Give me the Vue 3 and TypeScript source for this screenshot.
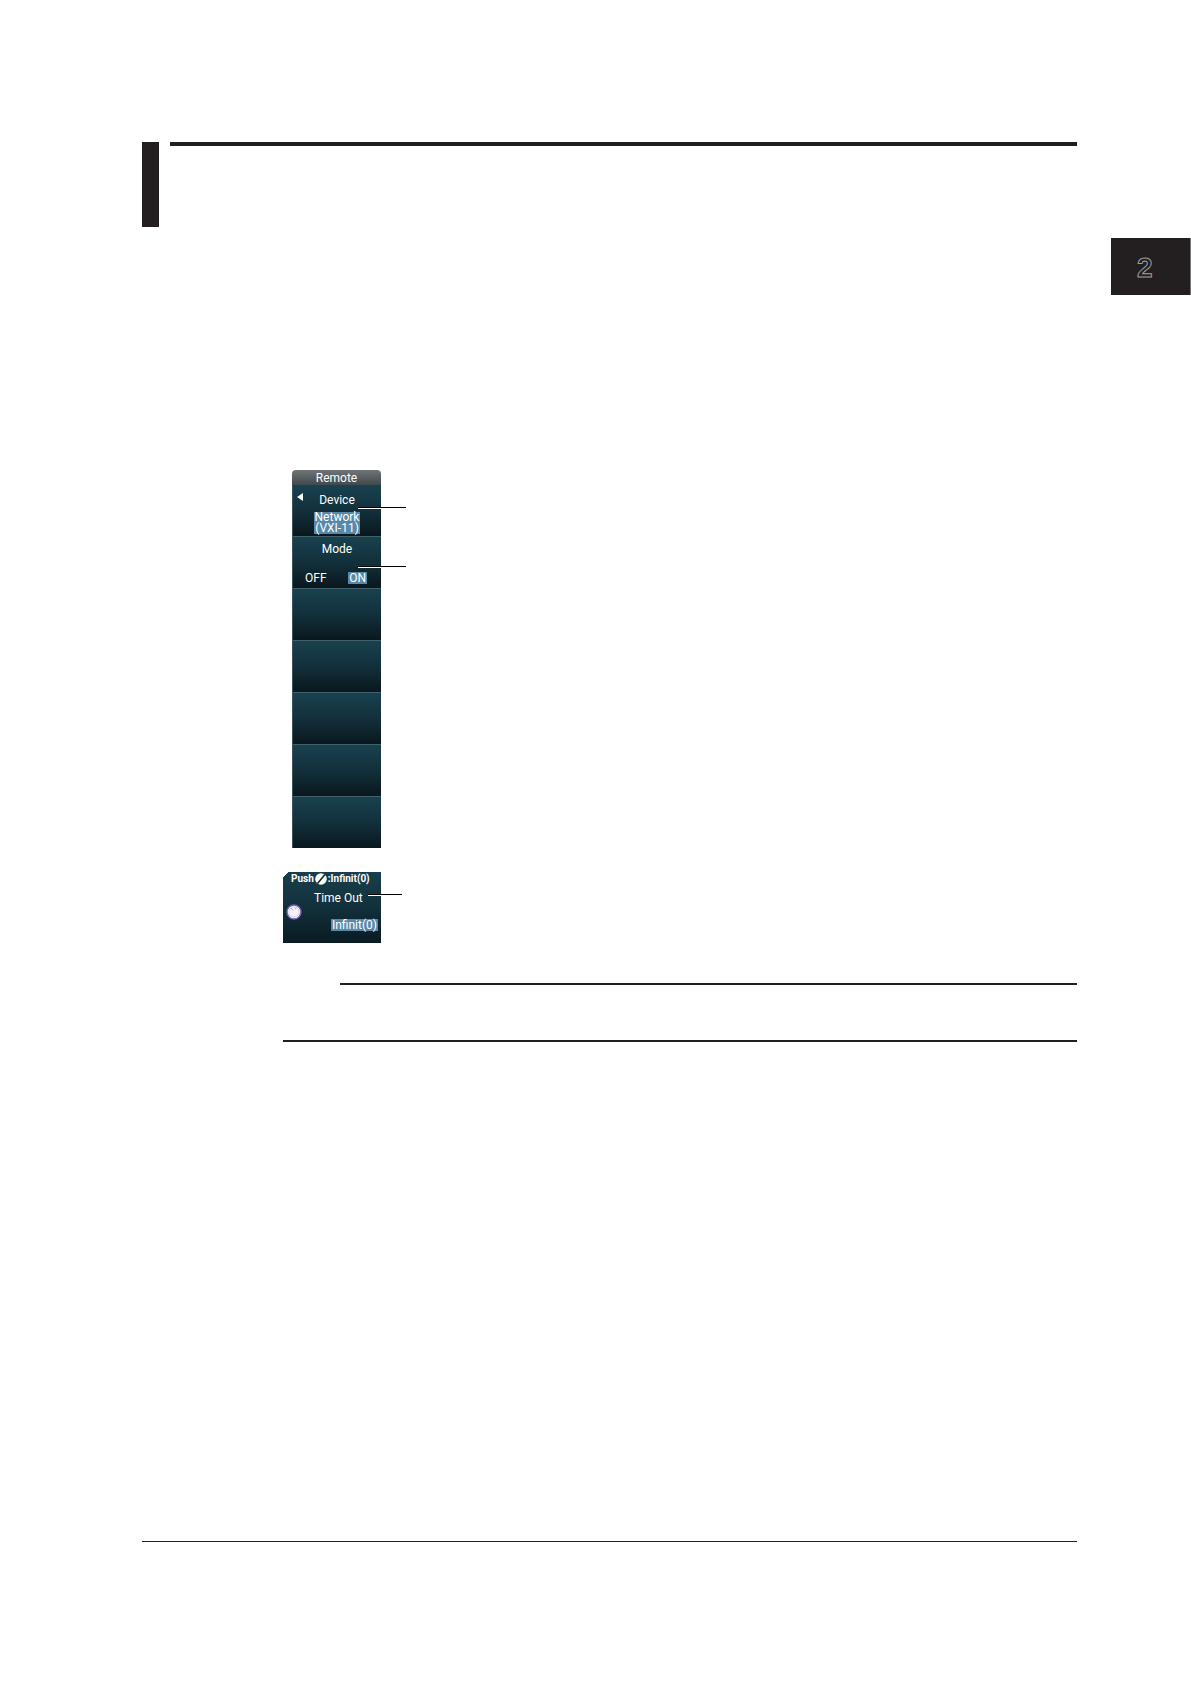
<script setup lang="ts">
import { ref } from 'vue'

const chapter = 2
const mode = ref<'OFF' | 'ON'>('ON')
const modes: Array<'OFF' | 'ON'> = ['OFF', 'ON']
const emptyKeys = 5
</script>

<template>
  <div class="page">
    <header class="heading">
      <span class="block"></span>
      <span class="rule"></span>
    </header>

    <aside class="tab">{{ chapter }}</aside>

    <main class="content">
      <section class="menu">
        <h1 class="title">Remote</h1>
        <button class="key device" type="button">
          <svg class="arrow" viewBox="0 0 6 8" aria-hidden="true">
            <path d="M6 0V8L0 4Z" fill="#fff" />
          </svg>
          <span>Device</span>
          <span class="value">Network<br />(VXI-11)</span>
          <span class="leader"></span>
        </button>
        <div class="key mode">
          <span>Mode</span>
          <div class="options">
            <button
              v-for="m in modes"
              :key="m"
              type="button"
              class="option"
              :class="{ selected: mode === m }"
              @click="mode = m"
            >{{ m }}</button>
          </div>
          <span class="leader"></span>
        </div>
        <button
          v-for="n in emptyKeys"
          :key="n"
          class="key"
          type="button"
          aria-label="Unassigned"
        ></button>
      </section>

      <button class="knob-panel" type="button">
        <span class="hint">
          <span>Push</span>
          <svg class="push" viewBox="0 0 12 12" aria-hidden="true">
            <circle cx="6" cy="6" r="5.8" fill="#fff" />
            <path d="M2.5 10.5L10 1.5" stroke="#10242c" stroke-width="1.6" />
          </svg>
          <span>:Infinit(0)</span>
        </span>
        <span class="timeout">Time Out</span>
        <svg class="knob" viewBox="0 0 16 16" aria-hidden="true">
          <circle cx="8" cy="8" r="7" fill="#f7f3f7" stroke="#6f62b4" stroke-width="1.4" />
          <circle cx="8" cy="8" r="5" fill="none" stroke="#d9cfdf" stroke-width="1" />
          <path d="M5 4L7 6.5M9 5L10.5 4" stroke="#b5a9bd" stroke-width="1" fill="none" />
        </svg>
        <span class="value infinite">Infinit(0)</span>
        <span class="leader short"></span>
      </button>

      <section class="note"></section>
    </main>

    <footer class="footer"></footer>
  </div>
</template>

<style>
body {
  margin: 0;
  background: #fff;
}
</style>

<style scoped>
.page {
  display: flex;
  flex-direction: column;
  padding: 142px 0;
  font-family: Roboto, "Liberation Sans", sans-serif;
}

.heading {
  display: flex;
  gap: 11px;
  margin: 0 114px 0 142px;
}

.block {
  width: 17px;
  height: 85px;
  background: #231f20;
}

.rule {
  flex: 1;
  height: 4px;
  background: #231f20;
}

.tab {
  align-self: flex-end;
  box-sizing: border-box;
  width: 80px;
  height: 57px;
  margin-top: 11px;
  padding-left: 26px;
  border-right: 1px solid #777475;
  background: #231f20;
  color: #231f20;
  font: bold 28px/60px "Liberation Sans", sans-serif;
  -webkit-text-stroke: 1px #a09e9f;
}

.content {
  display: flex;
  flex-direction: column;
  margin: 175px 114px 0 283px;
}

.menu {
  width: 89px;
  margin-left: 9px;
}

.title {
  height: 15px;
  margin: 0;
  border-radius: 4px 4px 0 0;
  background: linear-gradient(#6f7577, #41494d);
  color: #fff;
  font-size: 12px;
  font-weight: 400;
  line-height: 16px;
  text-align: center;
}

.key {
  position: relative;
  display: flex;
  flex-direction: column;
  align-items: center;
  box-sizing: border-box;
  width: 100%;
  height: 52px;
  padding: 0;
  border: 0;
  border-top: 1px solid #40606b;
  border-left: 1px solid #3b525b;
  background: linear-gradient(#19414f, #12303b 50%, #0a171e);
  color: #fff;
  font: 400 12px/12px Roboto, sans-serif;
}

.device {
  gap: 6px;
  height: 51px;
  padding-top: 8px;
  border-top-color: #19414f;
}

.mode {
  gap: 17px;
  padding-top: 6px;
}

.value {
  background: #5989a8;
}

.device .value {
  width: 46px;
  line-height: 11px;
}

.arrow {
  position: absolute;
  top: 7px;
  left: 4px;
  width: 6px;
  height: 8px;
}

.options {
  display: flex;
  justify-content: space-between;
  align-self: stretch;
  padding: 0 14px 0 11px;
}

.option {
  padding: 0 1px;
  border: 0;
  background: transparent;
  color: #fff;
  font: 400 12px/12px Roboto, sans-serif;
}

.selected {
  background: #5989a8;
}

.leader {
  position: absolute;
  top: 21px;
  left: 65px;
  box-sizing: border-box;
  width: 48px;
  height: 2px;
  border-top: 1px solid #000;
  background: #fff;
}

.mode .leader {
  top: 29px;
}

.knob-panel {
  position: relative;
  display: flex;
  flex-direction: column;
  width: 98px;
  height: 71px;
  margin-top: 24px;
  padding: 0;
  border: 0;
  background: linear-gradient(135deg, #fff 4px, transparent 4px),
    linear-gradient(#193f4c, #12303b 50%, #0a1a22);
  color: #fff;
  font: 400 12px/12px Roboto, sans-serif;
}

.hint {
  display: flex;
  align-items: center;
  gap: 1px;
  height: 14px;
  padding-left: 8px;
  font-size: 10px;
  font-weight: 700;
}

.push {
  width: 12px;
  height: 12px;
}

.timeout {
  align-self: flex-start;
  margin: 6px 0 0 31px;
}

.knob {
  position: absolute;
  top: 32px;
  left: 3px;
  width: 16px;
  height: 16px;
}

.infinite {
  align-self: flex-end;
  margin: 15px 3px 0 0;
  padding: 0 1px;
}

.knob-panel .leader {
  top: 22px;
  left: 85px;
  width: 34px;
}

.note {
  box-sizing: border-box;
  height: 59px;
  margin-top: 40px;
  border-bottom: 2px solid #231f20;
}

.note::before {
  display: block;
  height: 2px;
  margin-left: 57px;
  background: #231f20;
  content: "";
}

.footer {
  margin: 499px 114px 0 142px;
  border-top: 1px solid #231f20;
}
</style>
